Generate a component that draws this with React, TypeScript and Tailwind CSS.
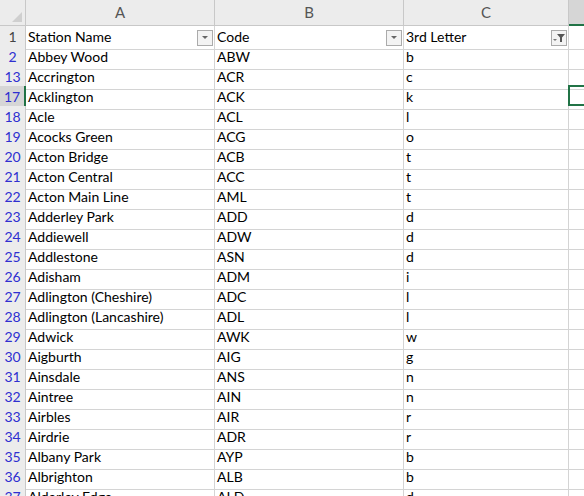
import React from 'react';

type Row = { n: number; name: string; code: string; letter: string };

const rows: Row[] = [
  { n: 2, name: 'Abbey Wood', code: 'ABW', letter: 'b' },
  { n: 13, name: 'Accrington', code: 'ACR', letter: 'c' },
  { n: 17, name: 'Acklington', code: 'ACK', letter: 'k' },
  { n: 18, name: 'Acle', code: 'ACL', letter: 'l' },
  { n: 19, name: 'Acocks Green', code: 'ACG', letter: 'o' },
  { n: 20, name: 'Acton Bridge', code: 'ACB', letter: 't' },
  { n: 21, name: 'Acton Central', code: 'ACC', letter: 't' },
  { n: 22, name: 'Acton Main Line', code: 'AML', letter: 't' },
  { n: 23, name: 'Adderley Park', code: 'ADD', letter: 'd' },
  { n: 24, name: 'Addiewell', code: 'ADW', letter: 'd' },
  { n: 25, name: 'Addlestone', code: 'ASN', letter: 'd' },
  { n: 26, name: 'Adisham', code: 'ADM', letter: 'i' },
  { n: 27, name: 'Adlington (Cheshire)', code: 'ADC', letter: 'l' },
  { n: 28, name: 'Adlington (Lancashire)', code: 'ADL', letter: 'l' },
  { n: 29, name: 'Adwick', code: 'AWK', letter: 'w' },
  { n: 30, name: 'Aigburth', code: 'AIG', letter: 'g' },
  { n: 31, name: 'Ainsdale', code: 'ANS', letter: 'n' },
  { n: 32, name: 'Aintree', code: 'AIN', letter: 'n' },
  { n: 33, name: 'Airbles', code: 'AIR', letter: 'r' },
  { n: 34, name: 'Airdrie', code: 'ADR', letter: 'r' },
  { n: 35, name: 'Albany Park', code: 'AYP', letter: 'b' },
  { n: 36, name: 'Albrighton', code: 'ALB', letter: 'b' },
  { n: 37, name: 'Alderley Edge', code: 'ALD', letter: 'd' },
];

const cols = 'grid grid-cols-[26px_189px_189px_165px_1fr]';

// kleine dropdown-knop van autofilter
const FilterButton = ({ active }: { active?: boolean }) => (
  <div className="w-[16px] h-[16px] border border-[#ababab] bg-[#f3f3f3] flex items-center justify-center mr-[1px]">
    {active ? (
      <svg width="12" height="10" viewBox="0 0 12 10">
        <path d="M4 1h8L9 4.5V9H7V4.5z" fill="#555" />
        <path d="M0 6h4L2 8z" fill="#777" />
      </svg>
    ) : (
      <svg width="8" height="5" viewBox="0 0 8 5">
        <path d="M1 1h6L4 4z" fill="#666" />
      </svg>
    )}
  </div>
);

export default function App() {
  return (
    <div className="w-[584px] h-[496px] overflow-hidden bg-white text-[14px] text-black" style={{ fontFamily: 'Lato, "Liberation Sans", sans-serif' }}>
      {/* kolomkoppen */}
      <div className={`${cols} h-[26px] bg-[#ececec] text-[#555] text-[15px]`}>
        <div className="relative border-r border-b border-[#c8c8c8]">
          <svg className="absolute right-[3px] bottom-[3px]" width="10" height="10" viewBox="0 0 10 10">
            <path d="M10 0V10H0z" fill="#cfcfcf" />
          </svg>
        </div>
        <div className="flex items-center justify-center border-r border-b border-[#c8c8c8]">A</div>
        <div className="flex items-center justify-center border-r border-b border-[#c8c8c8]">B</div>
        <div className="flex items-center justify-center border-r border-b border-[#c8c8c8]">C</div>
        <div className="bg-[#d6d6d6] border-b-2 border-[#217346]"></div>
      </div>

      {/* rij 1: kopjes met filters */}
      <div className={`${cols} h-[20px]`}>
        <div className="flex items-center justify-center pb-[2px] bg-[#ececec] text-[#444] border-r border-b border-[#c8c8c8]">1</div>
        <div className="flex items-center justify-between pl-[2px] border-r border-b border-[#d4d4d4]">
          <span className="pb-[2px]">Station Name</span>
          <FilterButton />
        </div>
        <div className="flex items-center justify-between pl-[2px] border-r border-b border-[#d4d4d4]">
          <span className="pb-[2px]">Code</span>
          <FilterButton />
        </div>
        <div className="flex items-center justify-between pl-[2px] border-r border-b border-[#d4d4d4]">
          <span className="pb-[2px]">3rd Letter</span>
          <FilterButton active />
        </div>
        <div className="border-b border-[#d4d4d4]"></div>
      </div>

      {rows.map((r) => {
        const sel = r.n === 17;
        return (
          <div key={r.n} className={`${cols} h-[20px]`}>
            <div className={`flex items-center justify-center pb-[2px] text-[#2f2fd0] border-b border-[#c8c8c8] ${sel ? 'bg-[#d6d6d6] border-r-2 border-r-[#217346]' : 'bg-[#ececec] border-r'}`}>{r.n}</div>
            <div className="flex items-center pl-[2px] pb-[2px] border-r border-b border-[#d4d4d4] whitespace-nowrap">{r.name}</div>
            <div className="flex items-center pl-[2px] pb-[2px] border-r border-b border-[#d4d4d4]">{r.code}</div>
            <div className="flex items-center pl-[2px] pb-[2px] border-r border-b border-[#d4d4d4]">{r.letter}</div>
            <div className="relative border-b border-[#d4d4d4]">
              {sel && <div className="absolute -left-[1px] -top-[1px] w-[40px] h-[21px] border-2 border-[#217346]"></div>}
            </div>
          </div>
        );
      })}
    </div>
  );
}
